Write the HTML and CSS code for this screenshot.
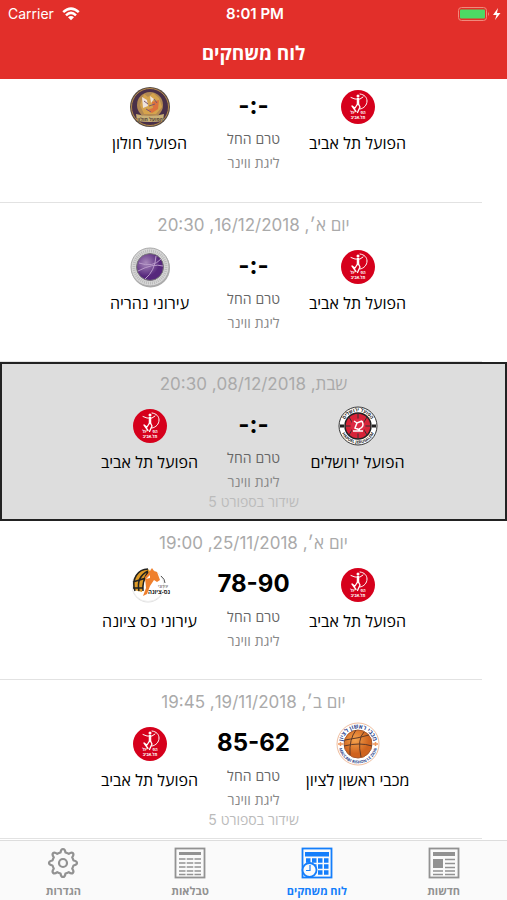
FILE: index.html
```html
<!DOCTYPE html>
<html lang="he" dir="rtl">
<head>
    <meta charset="UTF-8">
    <meta name="viewport" content="width=device-width, initial-scale=1.0">
    <title>לוח משחקים</title>
    <link rel="stylesheet" href="styles.css">
</head>
<body>

    <!-- gradients and text paths for the logos -->
    <svg class="defs" aria-hidden="true">
        <defs>
            <radialGradient id="purple-ball" cx="35%" cy="35%">
                <stop offset="0" stop-color="#a889bb"/>
                <stop offset="1" stop-color="#56277c"/>
            </radialGradient>
            <radialGradient id="orange-ball" cx="40%" cy="35%">
                <stop offset="0" stop-color="#f6a34d"/>
                <stop offset="1" stop-color="#cf631e"/>
            </radialGradient>
            <path id="jer-top" d="M7.500 22A14.500 14.500 0 0 1 36.500 22"/>
            <path id="jer-bottom" d="M4.500 22A17.500 17.500 0 0 0 39.500 22"/>
            <path id="rishon-top" d="M6.500 22A15.500 15.500 0 0 1 37.500 22"/>
            <path id="rishon-bottom" d="M2.500 22A19.500 19.500 0 0 0 41.500 22"/>
        </defs>
    </svg>

    <!-- team logos, reused in the rows below -->
    <svg class="sprites" aria-hidden="true">
        <symbol id="logo-tel-aviv" viewBox="0 0 44 44">
            <circle cx="22" cy="22" r="17" fill="#d6001c"/>
            <g fill="none" stroke="#fff" stroke-linecap="round" stroke-linejoin="round">
                <path d="M24 9C28.500 9.500 31 12.500 31 16C31 20 28 23.500 24 24"/>
                <path d="M15 12.500L19 14H24L27 12"/>
                <path d="M22 14V19" stroke-width="2.500"/>
                <path d="M21.500 19L19 23L16 21M22.500 19L24 22L21.500 27.500M16 21L20 26.500" stroke-width="1.300"/>
            </g>
            <circle cx="22" cy="11" r="1.500" fill="#fff"/>
            <text class="logo-text" x="27" y="29" font-size="4" fill="#fff">הפ</text>
            <text class="logo-text" x="16.500" y="29" font-size="4" fill="#fff">על</text>
            <text class="logo-text" x="22" y="34" font-size="4" fill="#fff">תל-אביב</text>
        </symbol>

        <symbol id="logo-holon" viewBox="0 0 44 44">
            <circle cx="22" cy="22" r="20" fill="#594c45"/>
            <circle cx="22" cy="22" r="18.500" fill="#493049" stroke="#b58a4c"/>
            <circle cx="22" cy="20" r="13" fill="#b28952"/>
            <path d="M12 20L16 9L20 12L25 8L31 13L34 22L28 29L16 29Z" fill="#d5a34d"/>
            <path d="M14 12L19 15L20 21L15 23ZM22 11L26 14L23 18Z" fill="#eee3dd"/>
            <path d="M24 17L31 15L30 24L24 28L19 25L25 23Z" fill="#dc713e"/>
            <path d="M16 16L20 19M26 14L29 18M21 21L27 19M18 24L23 27" stroke="#7b5970"/>
            <path d="M8 29Q22 33 36 29L35 36Q22 38 9 36Z" fill="#c9b077"/>
            <text class="logo-text" x="22" y="35.500" font-size="5" fill="#514238">הפועל חולון</text>
        </symbol>

        <symbol id="logo-nahariya" viewBox="0 0 44 44">
            <circle cx="22.500" cy="23" r="19.500" fill="#aaa"/>
            <circle cx="22" cy="22" r="19" fill="#d8d8d8" stroke="#aaa"/>
            <circle cx="22" cy="22" r="16" fill="none" stroke="#bbb" stroke-width="3" stroke-dasharray="1 1"/>
            <circle cx="22" cy="22" r="13.500" fill="url(#purple-ball)" stroke="#777"/>
            <path d="M11 18Q25 23 33 14M10 26Q25 18 35 21M17 34Q27 26 28 11" fill="none" stroke="#b99bca"/>
        </symbol>

        <symbol id="logo-jerusalem" viewBox="0 0 44 44">
            <circle cx="22" cy="22" r="19" fill="#fff" stroke="#333"/>
            <circle cx="22" cy="22" r="13" fill="#d72338" stroke="#222" stroke-width="1.500"/>
            <path d="M9 22H35M22 9V35M13 13Q20 22 13 31M31 13Q24 22 31 31" fill="none" stroke="#333"/>
            <circle cx="22" cy="22" r="7.500" fill="#dc2942"/>
            <path d="M18 17L21 19L26 17M26 17Q29 23 23 25M21 19L19 24L24 26M17 27H27" fill="none" stroke="#fff" stroke-width="1.500"/>
            <text class="logo-text" font-size="5" fill="#222"><textPath href="#jer-top" startOffset="50%">הפועל ירושלים</textPath></text>
            <text class="logo-text" font-size="4" fill="#222"><textPath href="#jer-bottom" startOffset="50%">HAPOEL JERUSALEM</textPath></text>
            <path d="M4 22H8M36 22H40" stroke="#222" stroke-width="3"/>
        </symbol>

        <symbol id="logo-nes-ziona" viewBox="0 0 44 44">
            <circle cx="20" cy="23.500" r="16" fill="#ddd"/>
            <circle cx="20" cy="22.500" r="16" fill="#fff" stroke="#eee"/>
            <path d="M6 27C3 15 10 6 20 6L23 9L16 19L14 29Z" fill="#df9b26"/>
            <path d="M7 28C3 16 10 6 20 6M11 28Q8 14 20 8M5 19L18 15M15 28Q14 18 20 9M5 25L15 25" fill="none" stroke="#222" stroke-width="1.500"/>
            <path d="M17 14L22 8L24 5L26 8L29 9L32 17L29 19L26 17L22 23L19 31L15 33L18 25Z" fill="#ef802d"/>
            <path d="M22 12L18 16L22 15Z" fill="#fff"/>
            <path d="M33 13Q37 16 37 20" fill="none" stroke="#555"/>
            <text class="logo-text" x="35" y="25" font-size="4" fill="#777">עירוני</text>
            <text class="logo-text" x="31" y="31" font-size="6" fill="#222">נס-ציונה</text>
        </symbol>

        <symbol id="logo-rishon" viewBox="0 0 44 44">
            <circle cx="22" cy="22" r="21" fill="#fff" stroke="#efbea0"/>
            <circle cx="22" cy="22" r="14" fill="url(#orange-ball)" stroke="#a8592d"/>
            <path d="M9 18Q23 16 33 13M8 24Q24 20 36 24M20 8Q13 17 14 33M28 10Q21 17 25 35" fill="none" stroke="#603a28"/>
            <text class="logo-text" font-size="6" fill="#2d458c"><textPath href="#rishon-top" startOffset="50%">מכבי ראשון לציון</textPath></text>
            <text class="logo-text" font-size="4" fill="#2d458c"><textPath href="#rishon-bottom" startOffset="50%">MACCABI RISHON LE ZION</textPath></text>
            <path d="M2 22H7M4.500 20V24M37 22H42M39.500 20V24" stroke="#ef965b" stroke-width="1.500"/>
        </symbol>
    </svg>

    <header class="header">
        <div class="status-bar" dir="ltr">
            <div class="carrier">
                <span>Carrier</span>
                <svg class="wifi" viewBox="0 0 18 14" aria-hidden="true">
                    <g fill="none" stroke="#fff" stroke-width="2.500">
                        <path d="M1.200 5.200Q9 -2 16.800 5.200"/>
                        <path d="M4 8.300Q9 3.500 14 8.300"/>
                    </g>
                    <path d="M6 10.300Q9 7.600 12 10.300L9 13.300Z" fill="#fff"/>
                </svg>
            </div>
            <time class="clock">8:01 PM</time>
            <svg class="battery" viewBox="0 0 44 14" aria-hidden="true">
                <rect x="0.500" y="0.500" width="28" height="13" rx="3" fill="none" stroke="#f08a7c"/>
                <rect x="2" y="2.500" width="25" height="9" rx="1" fill="#4cd964"/>
                <path d="M30 5Q32 7 30 9Z" fill="#f08a7c"/>
                <path d="M40 1L35 8H38.500L37 13L42.500 6H39Z" fill="#fff"/>
            </svg>
        </div>
        <h1>לוח משחקים</h1>
    </header>

    <main class="games">
        <article class="game game-first">
            <div class="teams">
                <div class="team">
                    <svg class="logo" aria-hidden="true"><use href="#logo-tel-aviv"/></svg>
                    <h2>הפועל תל אביב</h2>
                </div>
                <div class="details">
                    <strong class="score" dir="ltr">-:-</strong>
                    <span class="state">טרם החל</span>
                    <span class="league">ליגת ווינר</span>
                </div>
                <div class="team">
                    <svg class="logo" aria-hidden="true"><use href="#logo-holon"/></svg>
                    <h2>הפועל חולון</h2>
                </div>
            </div>
        </article>

        <article class="game">
            <p class="date">יום א׳, 16/12/2018, 20:30</p>
            <div class="teams">
                <div class="team">
                    <svg class="logo" aria-hidden="true"><use href="#logo-tel-aviv"/></svg>
                    <h2>הפועל תל אביב</h2>
                </div>
                <div class="details">
                    <strong class="score" dir="ltr">-:-</strong>
                    <span class="state">טרם החל</span>
                    <span class="league">ליגת ווינר</span>
                </div>
                <div class="team">
                    <svg class="logo" aria-hidden="true"><use href="#logo-nahariya"/></svg>
                    <h2>עירוני נהריה</h2>
                </div>
            </div>
        </article>

        <article class="game selected">
            <p class="date">שבת, 08/12/2018, 20:30</p>
            <div class="teams">
                <div class="team">
                    <svg class="logo" aria-hidden="true"><use href="#logo-jerusalem"/></svg>
                    <h2>הפועל ירושלים</h2>
                </div>
                <div class="details">
                    <strong class="score" dir="ltr">-:-</strong>
                    <span class="state">טרם החל</span>
                    <span class="league">ליגת ווינר</span>
                </div>
                <div class="team">
                    <svg class="logo" aria-hidden="true"><use href="#logo-tel-aviv"/></svg>
                    <h2>הפועל תל אביב</h2>
                </div>
            </div>
            <p class="channel">שידור בספורט 5</p>
        </article>

        <article class="game">
            <p class="date">יום א׳, 25/11/2018, 19:00</p>
            <div class="teams">
                <div class="team">
                    <svg class="logo" aria-hidden="true"><use href="#logo-tel-aviv"/></svg>
                    <h2>הפועל תל אביב</h2>
                </div>
                <div class="details">
                    <strong class="score" dir="ltr">78-90</strong>
                    <span class="state">טרם החל</span>
                    <span class="league">ליגת ווינר</span>
                </div>
                <div class="team">
                    <svg class="logo" aria-hidden="true"><use href="#logo-nes-ziona"/></svg>
                    <h2>עירוני נס ציונה</h2>
                </div>
            </div>
        </article>

        <article class="game">
            <p class="date">יום ב׳, 19/11/2018, 19:45</p>
            <div class="teams">
                <div class="team">
                    <svg class="logo" aria-hidden="true"><use href="#logo-rishon"/></svg>
                    <h2>מכבי ראשון לציון</h2>
                </div>
                <div class="details">
                    <strong class="score" dir="ltr">85-62</strong>
                    <span class="state">טרם החל</span>
                    <span class="league">ליגת ווינר</span>
                </div>
                <div class="team">
                    <svg class="logo" aria-hidden="true"><use href="#logo-tel-aviv"/></svg>
                    <h2>הפועל תל אביב</h2>
                </div>
            </div>
            <p class="channel">שידור בספורט 5</p>
        </article>
    </main>

    <nav class="tabs">
        <a class="tab" href="#news">
            <svg viewBox="0 0 32 32" aria-hidden="true">
                <rect x="1.500" y="1.500" width="29" height="29" fill="none" stroke="currentColor" stroke-width="1.800"/>
                <path d="M5 5H27V9H5ZM5 12H15V21H5Z" fill="currentColor"/>
                <path d="M17 12.500H27M17 16.500H27M17 20.500H27M5 24H15M17 24H27M5 27.500H15M17 27.500H27" stroke="currentColor" stroke-width="1.500"/>
            </svg>
            <span>חדשות</span>
        </a>
        <a class="tab active" href="#games" aria-current="page">
            <svg viewBox="0 0 32 32" aria-hidden="true">
                <rect x="1.500" y="1.500" width="29" height="29" fill="none" stroke="currentColor" stroke-width="1.800"/>
                <path d="M4 5H28V9.500H4Z" fill="currentColor"/>
                <path d="M5 13.500H27.500M5 19.500H27.500M17 25.500H27.500" stroke="currentColor" stroke-width="4.500" stroke-dasharray="4.500 1.500"/>
                <circle cx="8.500" cy="23" r="7" fill="#fafafa" stroke="currentColor" stroke-width="1.800"/>
                <path d="M9 18V23.500H5" fill="none" stroke="currentColor" stroke-width="1.200"/>
            </svg>
            <span>לוח משחקים</span>
        </a>
        <a class="tab" href="#tables">
            <svg viewBox="0 0 32 32" aria-hidden="true">
                <rect x="1.500" y="1.500" width="29" height="29" fill="none" stroke="currentColor" stroke-width="1.800"/>
                <path d="M5 5H27V8H5Z" fill="currentColor"/>
                <path d="M5 12H27M5 16H27M5 20H27M5 24H27M5 27.500H27" stroke="currentColor" stroke-width="1.500" stroke-dasharray="6.500 1.250"/>
            </svg>
            <span>טבלאות</span>
        </a>
        <a class="tab" href="#settings">
            <svg viewBox="0 0 32 32" aria-hidden="true">
                <g fill="none" stroke="currentColor" stroke-width="2.200" stroke-linejoin="round">
                    <path d="M13.500 5.500Q14 2 16 2T18.500 5.500Q20 6 21.700 6.800Q24.500 4.700 25.900 6.100T25.200 10.300Q26 12 26.500 13.500Q30 14 30 16T26.500 18.500Q26 20 25.200 21.700Q27.300 24.500 25.900 25.900T21.700 25.200Q20 26 18.500 26.500Q18 30 16 30T13.500 26.500Q12 26 10.300 25.200Q7.500 27.300 6.100 25.900T6.800 21.700Q6 20 5.500 18.500Q2 18 2 16T5.500 13.500Q6 12 6.800 10.300Q4.700 7.500 6.100 6.100T10.300 6.800Q12 6 13.500 5.500Z"/>
                    <circle cx="16" cy="16" r="4"/>
                </g>
            </svg>
            <span>הגדרות</span>
        </a>
    </nav>

</body>
</html>
```

FILE: styles.css
```css
* {
    box-sizing: border-box;
}

body {
    display: flex;
    flex-direction: column;
    height: 100vh;
    margin: 0;
    font-family: Inter, "Open Sans", "Liberation Sans", sans-serif;
    background: #fff;
    color: #000;
    overflow: hidden;
}

h1, h2, p {
    margin: 0;
}

.defs {
    position: absolute;
    width: 0;
    height: 0;
}

.sprites {
    display: none;
}

.logo-text {
    font-family: "Open Sans", sans-serif;
    font-weight: bold;
    text-anchor: middle;
}


.header {
    flex: none;
    padding-bottom: 10px;
    background: #e22f2a;
    color: #fff;
}

.status-bar {
    display: grid;
    grid-template-columns: 1fr auto 1fr;
    align-items: center;
    height: 27px;
    padding: 0 5px 0 8px;
    font-size: 14px;
}

.carrier {
    display: flex;
    align-items: center;
    gap: 8px;
}

.wifi {
    width: 18px;
    height: 14px;
}

.clock {
    font-size: 15px;
    font-weight: 600;
}

.battery {
    width: 44px;
    height: 14px;
    justify-self: end;
}

.header h1 {
    padding-top: 12px;
    font-size: 19px;
    line-height: 30px;
    text-align: center;
}


.games {
    flex: 1;
    min-height: 0;
    overflow: hidden;
}

.game {
    display: flex;
    flex-direction: column;
    min-height: 159px;
    padding-top: 10px;
    text-align: center;
}

.game-first {
    min-height: 124px;
    padding-top: 6px;
}

.game::after {
    content: "";
    height: 1px;
    margin-top: auto;
    margin-right: 25px;
    background: #e2e2e2;
}

.selected {
    padding-top: 8px;
    border: 2px solid #222;
    background: #ddd;
}

.selected::after {
    display: none;
}

.date {
    margin-bottom: 8px;
    font-size: 17px;
    line-height: 24px;
    color: #aaa;
}

.teams {
    display: grid;
    grid-template-columns: 120px 88px 120px;
    justify-content: center;
}

.team {
    display: flex;
    flex-direction: column;
    align-items: center;
}

.logo {
    width: 44px;
    height: 44px;
}

.team h2 {
    margin-top: 4px;
    font-size: 16px;
    font-weight: 500;
    line-height: 20px;
    white-space: nowrap;
}

.details {
    display: flex;
    flex-direction: column;
    font-size: 14px;
    line-height: 24px;
}

.score {
    font-size: 24px;
    line-height: 42px;
}

.state {
    color: #666;
}

.league {
    color: #888;
}

.channel {
    font-size: 14px;
    line-height: 16px;
    color: #bbb;
}


.tabs {
    flex: none;
    display: grid;
    grid-template-columns: repeat(4, 1fr);
    height: 60px;
    border-top: 1px solid #ddd;
    background: #fafafa;
}

.tab {
    display: flex;
    flex-direction: column;
    align-items: center;
    padding-top: 6px;
    color: #929292;
    font-size: 11px;
    font-weight: bold;
    line-height: 16px;
    text-decoration: none;
}

.tab svg {
    width: 32px;
    height: 32px;
    margin-bottom: 4px;
}

.active {
    color: #147efb;
}
```
